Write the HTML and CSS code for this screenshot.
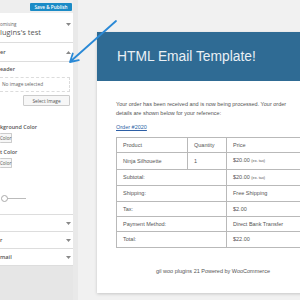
FILE: index.html
```html
<!DOCTYPE html>
<html lang="en">
<head>
  <meta charset="UTF-8">
  <title>Customizer preview</title>
  <link rel="stylesheet" href="styles.css">
</head>
<body>
  <div class="layout">
    <aside class="sidebar">
      <div class="topbar">
        <button class="publish">Save &amp; Publish</button>
      </div>
      <div class="panel">
        <div class="info">
          <div>
            <div class="info-small">omising</div>
            <div class="info-title">lugins's test</div>
          </div>
          <svg class="caret" width="5" height="3" viewBox="0 0 5 3"><path d="M0 0h5L2.5 3z"/></svg>
        </div>
        <div class="section open">
          <span>er</span>
          <svg class="caret" width="5" height="3" viewBox="0 0 5 3"><path d="M0 3h5L2.5 0z"/></svg>
        </div>
        <div class="controls">
          <div class="label">eader</div>
          <div class="placeholder">No image selected</div>
          <div class="btn-row"><button class="btn">Select Image</button></div>
          <div class="label gap-lg">kground Color</div>
          <button class="btn color">Color</button>
          <div class="label gap-sm">t Color</div>
          <button class="btn color">Color</button>
          <div class="slider"><span class="knob"></span></div>
        </div>
        <div class="section">
          <span></span>
          <svg class="caret" width="5" height="3" viewBox="0 0 5 3"><path d="M0 0h5L2.5 3z"/></svg>
        </div>
        <div class="section">
          <span>r</span>
          <svg class="caret" width="5" height="3" viewBox="0 0 5 3"><path d="M0 0h5L2.5 3z"/></svg>
        </div>
        <div class="section">
          <span>mail</span>
          <svg class="caret" width="5" height="3" viewBox="0 0 5 3"><path d="M0 0h5L2.5 3z"/></svg>
        </div>
      </div>
    </aside>
    <div class="strip"></div>
    <main class="preview">
      <div class="email">
        <div class="email-header">HTML Email Template!</div>
        <div class="email-body">
          <p>Your order has been received and is now being processed. Your order details are shown below for your reference:</p>
          <a class="order-link" href="#">Order #2020</a>
          <table class="order">
            <colgroup>
              <col style="width: 71px">
              <col style="width: 39px">
              <col>
            </colgroup>
            <tr><td>Product</td><td>Quantity</td><td>Price</td></tr>
            <tr><td>Ninja Silhouette</td><td>1</td><td>$20.00 <small>(ex. tax)</small></td></tr>
            <tr><td colspan="2">Subtotal:</td><td>$20.00 <small>(ex. tax)</small></td></tr>
            <tr><td colspan="2">Shipping:</td><td>Free Shipping</td></tr>
            <tr><td colspan="2">Tax:</td><td>$2.00</td></tr>
            <tr><td colspan="2">Payment Method:</td><td>Direct Bank Transfer</td></tr>
            <tr><td colspan="2">Total:</td><td>$22.00</td></tr>
          </table>
          <div class="footer">gil woo plugins 21 Powered by WooCommerce</div>
        </div>
      </div>
    </main>
  </div>

  <!-- arrow pointing at the header control -->
  <svg class="arrow" width="300" height="300" viewBox="0 0 300 300">
    <path d="M116 21L71 61M78.8 60.2L70 62L72.8 53.5" fill="none" stroke="#2a89d6" stroke-width="1.8" stroke-linecap="round" stroke-linejoin="round"/>
  </svg>
</body>
</html>
```

FILE: styles.css
```css
body {
  margin: 0;
  width: 300px;
  height: 300px;
  overflow: hidden;
  background: #f1f1f1;
  font-family: "Open Sans", "Liberation Sans", sans-serif;
}

.layout {
  display: grid;
  grid-template-columns: 73px 5px 1fr;
  height: 300px;
}

/* sidebar */
.sidebar {
  background: #e6e6e6;
  overflow: hidden;
}

.topbar {
  height: 13px;
  background: #eeeeee;
  display: flex;
  justify-content: flex-end;
  align-items: flex-start;
  padding: 3px 1px 0 0;
  box-sizing: border-box;
}

.publish {
  height: 8px;
  width: 42px;
  padding: 0;
  border: none;
  border-radius: 1px;
  background: #1b8bc6;
  color: #fff;
  font-family: "Open Sans", sans-serif;
  font-size: 4.7px;
  font-weight: 600;
  line-height: 8px;
}

.panel {
  background: #fff;
}

.caret {
  fill: #888;
  flex: none;
}

.info {
  height: 30px;
  box-sizing: border-box;
  border-bottom: 1px solid #dddddd;
  display: flex;
  justify-content: space-between;
  align-items: flex-start;
  padding: 8px 2px 0 0;
}

.info .caret {
  margin-top: 2px;
}

.info-small {
  font-size: 4.5px;
  line-height: 6px;
  color: #666;
}

.info-title {
  font-size: 7.5px;
  line-height: 10px;
  color: #555;
}

.section {
  height: 17px;
  box-sizing: border-box;
  border-bottom: 1px solid #dddddd;
  display: flex;
  justify-content: space-between;
  align-items: center;
  padding-right: 2px;
  font-size: 5.6px;
  font-weight: 600;
  color: #555;
}

.section.open {
  height: 19px;
}

.controls {
  padding: 3px 3px 13px 0;
  border-bottom: 1px solid #dddddd;
}

.label {
  font-size: 5.4px;
  line-height: 8px;
  font-weight: 600;
  color: #555;
}

.gap-lg {
  margin-top: 17px;
}

.gap-sm {
  margin-top: 5px;
}

.placeholder {
  margin-top: 4px;
  height: 15px;
  box-sizing: border-box;
  border: 1px dashed #dcdcdc;
  border-left: none;
  padding-left: 2px;
  font-size: 4.8px;
  line-height: 13px;
  color: #666;
}

.btn-row {
  display: flex;
  justify-content: flex-end;
  margin-top: 3px;
}

.btn {
  display: block;
  padding: 0;
  border: 1px solid #cccccc;
  border-radius: 1px;
  background: #f7f7f7;
  color: #555;
  font-family: "Open Sans", sans-serif;
  font-size: 4.8px;
}

.btn-row .btn {
  width: 47px;
  height: 11px;
}

.btn.color {
  margin-top: 2px;
  width: 12px;
  height: 10px;
  border-left: none;
  text-align: right;
  padding-right: 1px;
  font-size: 4.5px;
}

.slider {
  position: relative;
  margin-top: 27px;
  margin-left: 4px;
  width: 22px;
  height: 6px;
  background: linear-gradient(#bbbbbb, #bbbbbb) center / 100% 1px no-repeat;
}

.knob {
  position: absolute;
  left: -3px;
  top: 0;
  width: 5px;
  height: 5px;
  border: 0.6px solid #aaa;
  border-radius: 50%;
  background: #fff;
}

.strip {
  background: #e9e9e9;
}

/* preview */
.preview {
  overflow: hidden;
  padding: 32px 0 0 19px;
}

.email {
  width: 232px;
  background: #fff;
  box-shadow: 0 1px 3px rgba(0, 0, 0, 0.18);
  font-family: "Liberation Sans", Arial, sans-serif;
}

.email-header {
  height: 49px;
  background: #2f6b94;
  color: #eaf0f5;
  font-size: 13.8px;
  line-height: 49px;
  padding-left: 20px;
}

.email-body {
  padding: 18.5px 19px 16.5px 19px;
  color: #555;
  font-size: 5.5px;
  line-height: 9px;
}

.email-body p {
  margin: 0;
  max-width: 182px;
}

.order-link {
  display: block;
  margin-top: 5px;
  color: #2d5fa6;
}

.order {
  width: 194px;
  margin-top: 5.5px;
  border-collapse: collapse;
  table-layout: fixed;
}

.order td {
  border: 1px solid #b9b9b9;
  padding: 0 6px;
  line-height: 14.4px;
  white-space: nowrap;
}

.order small {
  font-size: 3.8px;
}

.footer {
  margin-top: 19.5px;
  text-align: center;
}

.arrow {
  position: absolute;
  top: 0;
  left: 0;
  pointer-events: none;
}
```
